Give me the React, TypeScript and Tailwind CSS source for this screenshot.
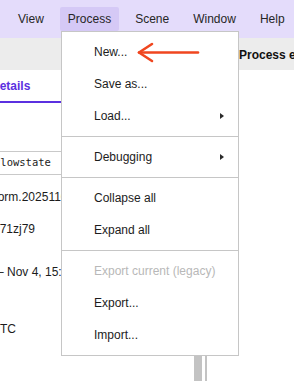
import React from 'react';

const menuBar = ['View', 'Process', 'Scene', 'Window', 'Help'];

type Entry =
  | { kind: 'item'; label: string; sub?: boolean; disabled?: boolean }
  | { kind: 'sep' };

const processMenu: Entry[] = [
  { kind: 'item', label: 'New...' },
  { kind: 'item', label: 'Save as...' },
  { kind: 'item', label: 'Load...', sub: true },
  { kind: 'sep' },
  { kind: 'item', label: 'Debugging', sub: true },
  { kind: 'sep' },
  { kind: 'item', label: 'Collapse all' },
  { kind: 'item', label: 'Expand all' },
  { kind: 'sep' },
  { kind: 'item', label: 'Export current (legacy)', disabled: true },
  { kind: 'item', label: 'Export...' },
  { kind: 'item', label: 'Import...' },
];

function SubArrow() {
  return (
    <svg width="4" height="6" viewBox="0 0 4 6">
      <path d="M0 0 L4 3 L0 6 Z" fill="#2b2b2b" />
    </svg>
  );
}

export default function App() {
  return (
    <div
      className="relative w-[294px] h-[381px] overflow-hidden bg-white text-[12px] text-[#1c1c1c] flex flex-col"
      style={{ fontFamily: '"Liberation Sans", Arial, sans-serif' }}
    >
      {/* Menu bar */}
      <div className="h-[38px] shrink-0 bg-[#e4dcfb] flex items-center pl-[10px] gap-2">
        {menuBar.map((m) => (
          <div
            key={m}
            className={`h-6 px-2 flex items-center rounded-[2px] text-[#262626] ${
              m === 'Process' ? 'bg-[#d5c9f6]' : ''
            }`}
          >
            {m}
          </div>
        ))}
      </div>

      {/* Toolbar strip */}
      <div className="h-8 shrink-0 bg-[#ececec] flex items-center pl-[239px] pt-[2px] whitespace-nowrap">
        <span className="font-bold text-[#111]">Process editor</span>
      </div>

      {/* Page content behind the menu */}
      <div className="flex-1 flex min-h-0">
        <div className="w-[194px] overflow-hidden flex flex-col">
          <div className="h-[33px] border-b-2 border-[#5b30e0] flex items-center -ml-[9px] w-[140px]">
            <span className="font-bold text-[#5b30e0]">Details</span>
          </div>
          <div className="mt-[48px] h-6 border-y border-[#c9c9c9] flex items-center -ml-[6px]">
            <span
              className="text-[10.5px] text-[#222]"
              style={{ fontFamily: '"DejaVu Sans Mono", "Liberation Mono", monospace' }}
            >
              flowstate
            </span>
          </div>
          <div className="mt-[14px] h-4 leading-4 whitespace-nowrap -ml-[25px]">platform.20251104</div>
          <div className="mt-4 h-4 leading-4 whitespace-nowrap -ml-[7px]">g71zj79</div>
          <div className="mt-[27px] h-4 leading-4 whitespace-nowrap -ml-[3px]">– Nov 4, 15:13</div>
          <div className="mt-[41px] h-4 leading-4 whitespace-nowrap">TC</div>
        </div>
        <div className="w-2 bg-[#c3c3c3]" />
        <div className="w-[3px]" />
        <div className="w-[2px] bg-[#c3c3c3]" />
      </div>

      {/* Process dropdown */}
      <div className="absolute left-[61px] top-[31px] w-[178px] bg-white border border-[#c6c6c6] py-1">
        {processMenu.map((e, i) =>
          e.kind === 'sep' ? (
            <div key={i} className="my-1 h-px bg-[#c6c6c6]" />
          ) : (
            <div
              key={i}
              className={`h-8 pl-8 pr-[14px] flex items-center justify-between ${
                e.disabled ? 'text-[#b8b8b8]' : 'text-[#1c1c1c]'
              }`}
            >
              <span>{e.label}</span>
              {e.sub && <SubArrow />}
            </div>
          )
        )}
      </div>

      {/* Annotation arrow */}
      <svg className="absolute left-0 top-0" width="294" height="381">
        <g stroke="#f0461f" strokeWidth="2.6" strokeLinecap="round" strokeLinejoin="round" fill="none">
          <path d="M198 52.5 L139 52.5" />
          <path d="M152 44 L139 52.5 L152 61" />
        </g>
      </svg>
    </div>
  );
}
